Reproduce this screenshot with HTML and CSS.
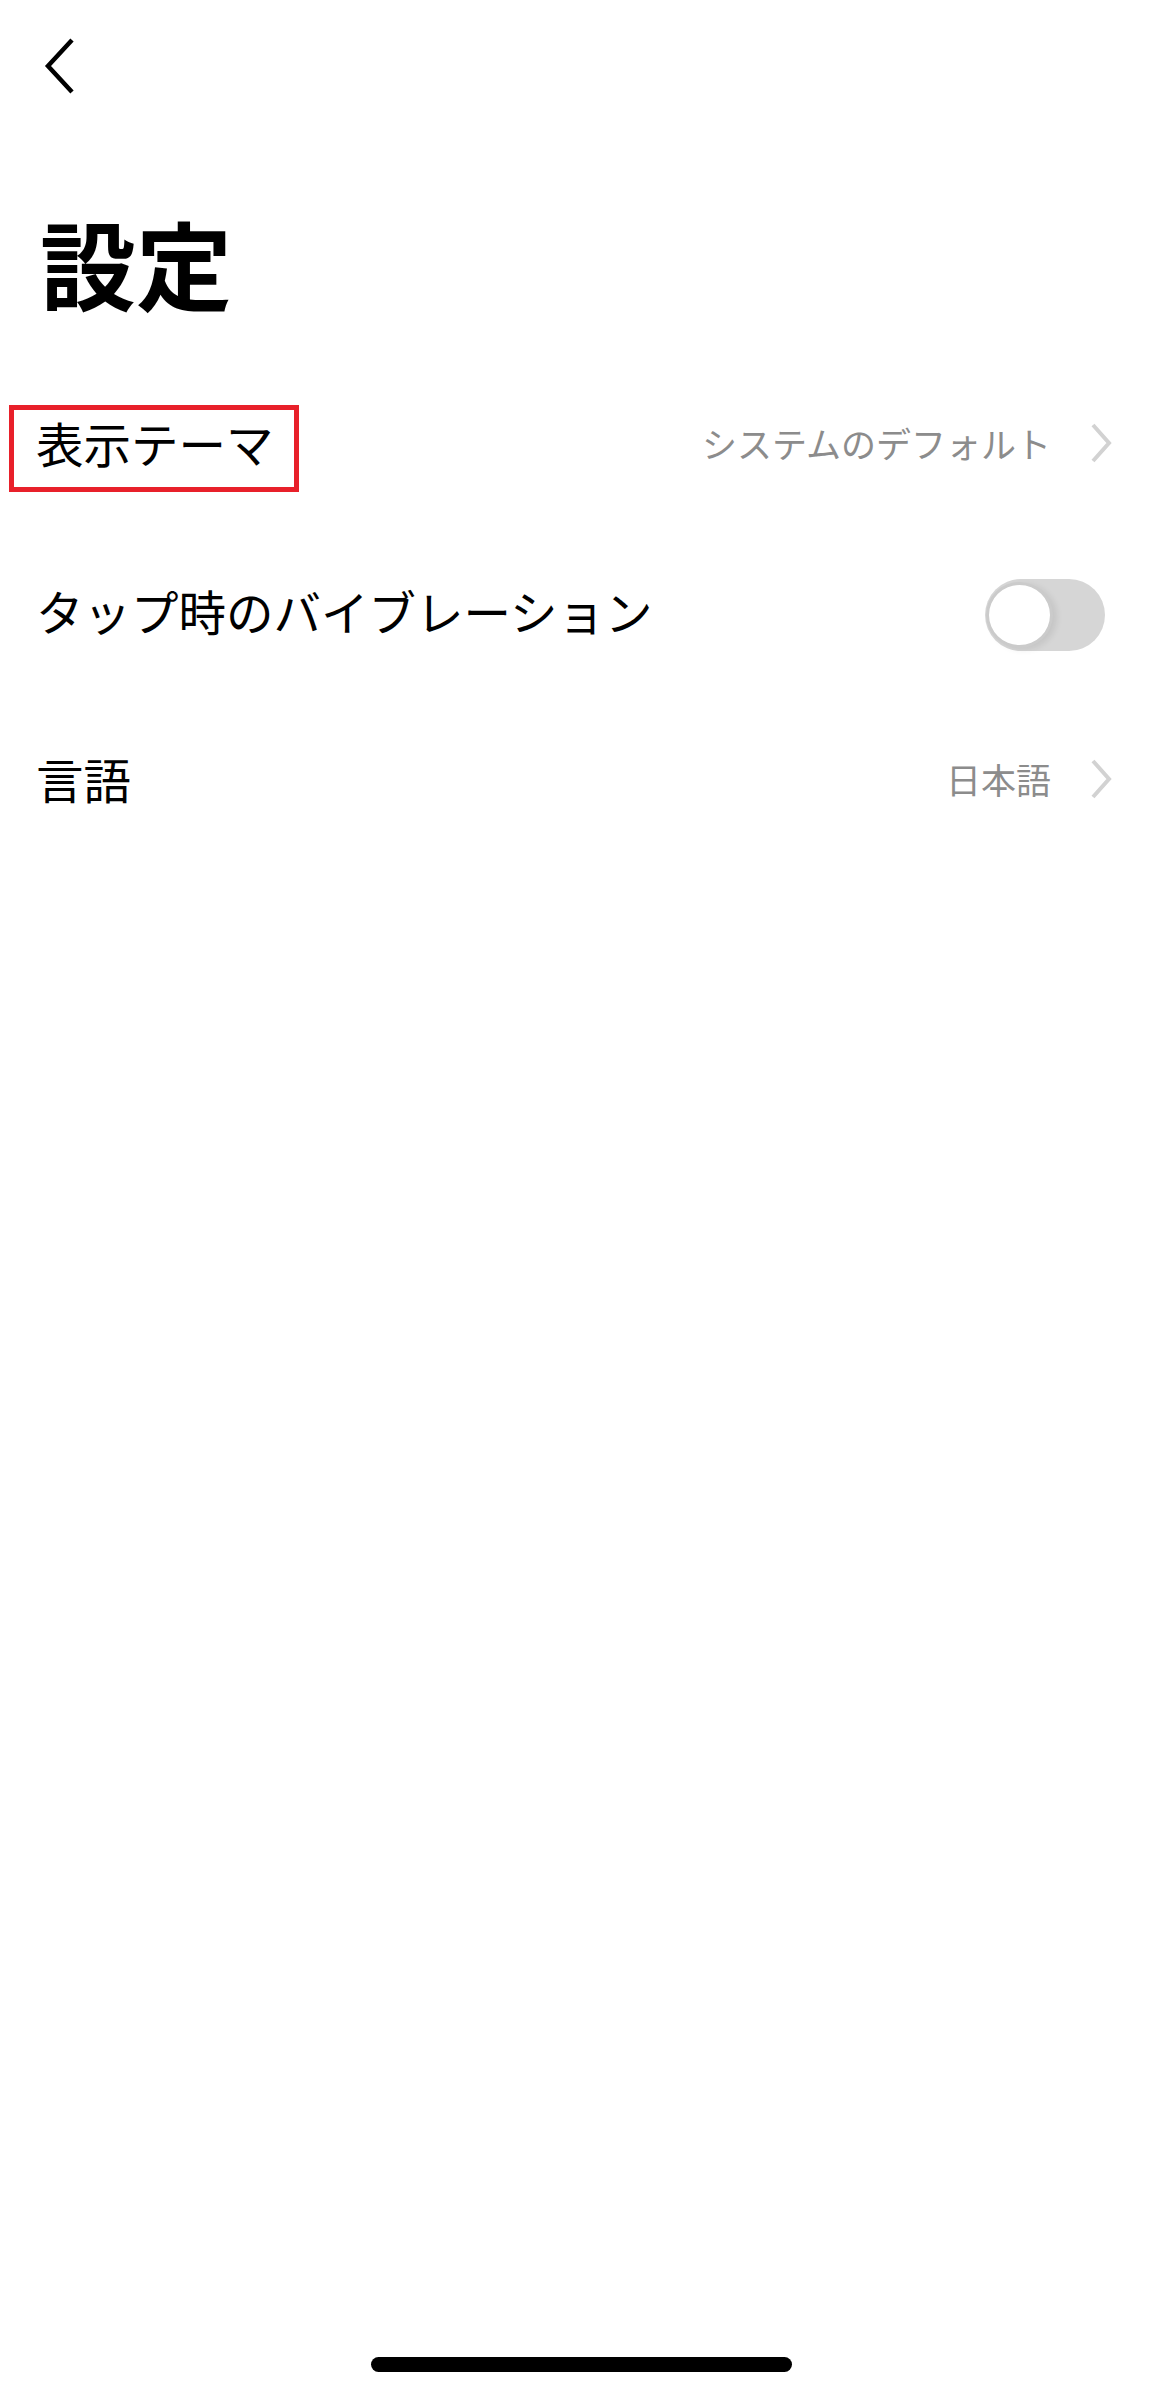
FILE: index.html
```html
<!DOCTYPE html>
<html lang="ja">
  <head>
    <meta charset="UTF-8" />
    <meta name="viewport" content="width=device-width, initial-scale=1.0" />
    <title>設定</title>
    <link rel="stylesheet" href="styles.css">
  </head>
  <body>
    <div class="screen">
      <!-- Top bar -->
      <div class="nav">
        <svg class="back" width="40" height="64" viewBox="0 0 40 64">
          <path d="M32 6 L8 32 L32 58" fill="none" stroke="#000" stroke-width="4.5" />
        </svg>
      </div>

      <h1 class="title">設定</h1>

      <div class="list">
        <div class="row">
          <span class="label highlight">表示テーマ</span>
          <div class="value">
            <span class="value-text">システムのデフォルト</span>
            <svg class="chevron" width="22" height="40" viewBox="0 0 22 40">
              <path d="M3 2 L19 20 L3 38" fill="none" stroke="#d2d2d2" stroke-width="4" />
            </svg>
          </div>
        </div>
        <div class="row">
          <span class="label">タップ時のバイブレーション</span>
          <div class="toggle">
            <div class="knob"></div>
          </div>
        </div>
        <div class="row">
          <span class="label">言語</span>
          <div class="value">
            <span class="value-text">日本語</span>
            <svg class="chevron" width="22" height="40" viewBox="0 0 22 40">
              <path d="M3 2 L19 20 L3 38" fill="none" stroke="#d2d2d2" stroke-width="4" />
            </svg>
          </div>
        </div>
      </div>

      <div class="home-bar"></div>
    </div>
  </body>
</html>
```

FILE: styles.css
```css
* {
  margin: 0;
  padding: 0;
  box-sizing: border-box;
}

body {
  background: #fff;
  font-family: "Noto Sans CJK JP", "Noto Sans", sans-serif;
  color: #000;
}

.screen {
  min-height: 2395px;
  display: flex;
  flex-direction: column;
}

/* Top bar with back arrow */
.nav {
  height: 132px;
  padding: 34px 0 0 40px;
}

.back {
  display: block;
}

.title {
  font-size: 96px;
  font-weight: 700;
  line-height: 115px;
  margin-top: 72px;
  padding-left: 40px;
}

.list {
  margin-top: 40px;
}

.row {
  height: 168px;
  display: flex;
  align-items: center;
  justify-content: space-between;
  padding: 0 58px 0 36px;
}

.label {
  font-size: 47.5px;
  line-height: 68px;
}

/* Red annotation frame around the first label */
.highlight {
  position: relative;
}

.highlight::after {
  content: "";
  position: absolute;
  left: -27px;
  right: -25px;
  top: -4px;
  bottom: -15px;
  border: 5px solid #e8202a;
}

.value {
  display: flex;
  align-items: center;
  gap: 39px;
}

.value-text {
  font-size: 35px;
  line-height: 50px;
  color: #8c8c8c;
}

.chevron {
  display: block;
}

/* Switch (off state) */
.toggle {
  width: 120px;
  height: 72px;
  border-radius: 36px;
  background: #d6d6d6;
  margin-right: 7px;
  margin-top: 8px;
  padding: 3px 0 0 1px;
}

.knob {
  width: 67px;
  height: 66px;
  border-radius: 50%;
  background: #fff;
  border: 3px solid #cbcbcb;
  box-shadow: 4px 2px 6px rgba(0, 0, 0, 0.08);
}

.home-bar {
  width: 421px;
  height: 15px;
  border-radius: 8px;
  background: #000;
  margin: auto 0 23px 371px;
}
```
